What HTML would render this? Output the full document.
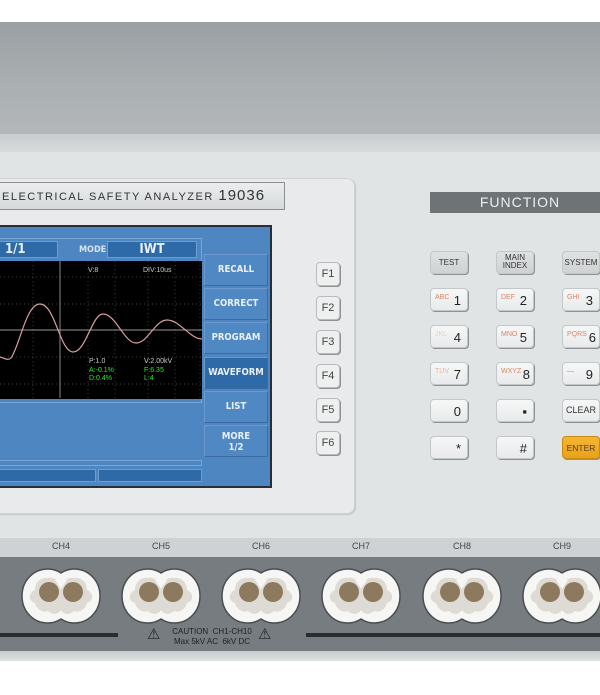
<!DOCTYPE html>
<html><head><meta charset="utf-8"><style>
*{margin:0;padding:0;box-sizing:border-box}
body{width:600px;height:695px;overflow:hidden;background:#fff;position:relative;font-family:"Liberation Sans",sans-serif}
.abs{position:absolute}
.key{position:absolute;width:38px;height:23px;border-radius:4px;background:linear-gradient(#f6f7f7,#e9eaeb);border:1px solid #c4c7c9;box-shadow:1px 1px 0 #8e9295;font-size:11px;color:#333}
.key .s{position:absolute;left:4px;top:5px;font-size:7px;color:#d9866a}
.key .n{position:absolute;right:6px;top:4px;font-size:13px;color:#222}
.key .c{position:absolute;left:0;right:0;text-align:center;top:6px;font-size:8px;color:#333}
.fb{position:absolute;left:316px;width:24px;height:24px;border-radius:4px;background:#eef0f0;border:1px solid #b9bcbe;box-shadow:1px 1px 0 #8e9295;font-size:11px;color:#444;text-align:center;line-height:22px}
.sb{position:absolute;left:204px;width:64px;height:32px;background:#5088c3;border:1px solid #6a9ad0;border-right-color:#3a6aa0;border-bottom-color:#3a6aa0;color:#e8f0fa;font-family:"DejaVu Sans Condensed","Liberation Sans",sans-serif;font-size:9.5px;font-weight:bold;text-align:center;line-height:30px}
.sock{position:absolute;top:568px;width:80px;height:56px}
.ch{position:absolute;top:541px;font-size:9px;color:#444;width:40px;text-align:center}
</style></head><body>
<div class="abs" style="left:0;top:22px;width:600px;height:112px;background:linear-gradient(#9a9fa3,#a9aeb1 50%,#b3b7ba)"></div>
<div class="abs" style="left:0;top:134px;width:600px;height:18px;background:linear-gradient(#c9ccce,#d8dbdc)"></div>
<div class="abs" style="left:0;top:152px;width:600px;height:388px;background:#e1e4e5"></div>
<div class="abs" style="left:-10px;top:178px;width:365px;height:336px;border-radius:8px;background:#e9eaeb;border:1px solid #cfd2d3;box-shadow:1px 1px 1px #c3c6c8"></div>
<div class="abs" style="left:0;top:182px;width:285px;height:28px;background:linear-gradient(#eceeee,#d6d9da);border:1px solid #8c8f90;border-left:none;font-size:11px;letter-spacing:1.5px;color:#333;line-height:26px;padding-left:2px">ELECTRICAL SAFETY ANALYZER <span style="font-size:15px;letter-spacing:1px">19036</span></div>
<div class="abs" style="left:0;top:225px;width:272px;height:263px;background:#4d86c1;border:2px solid #2a2f35;border-left:none"></div>
<div class="abs" style="left:0;top:238px;width:202px;height:165px;border:1px solid #7aa6d6;border-left:none"></div>
<div class="abs" style="left:0;top:241px;width:58px;height:17px;background:#2f6aa8;border:1px solid #6f9dd0;border-left:none;color:#e8f0fa;font-family:'DejaVu Sans Condensed',sans-serif;font-weight:bold;font-size:13px;line-height:15px;padding-left:5px">1/1</div>
<div class="abs" style="left:79px;top:245px;color:#d8e4f2;font-family:'DejaVu Sans Condensed',sans-serif;font-weight:bold;font-size:9px">MODE</div>
<div class="abs" style="left:107px;top:241px;width:90px;height:17px;background:#2f6aa8;border:1px solid #6f9dd0;color:#e8f0fa;font-family:'DejaVu Sans Condensed',sans-serif;font-weight:bold;font-size:13px;line-height:15px;text-align:center">IWT</div>
<svg class="abs" style="left:0;top:261px" width="202" height="138" viewBox="0 261 202 138">
<rect x="0" y="261" width="202" height="138" fill="#000"/>
<g stroke="#555" stroke-width="0.7" stroke-dasharray="1,3">
<line x1="33" y1="261" x2="33" y2="399"/><line x1="115" y1="261" x2="115" y2="399"/><line x1="148" y1="261" x2="148" y2="399"/><line x1="88" y1="261" x2="88" y2="399"/><line x1="175" y1="261" x2="175" y2="399"/><line x1="200" y1="261" x2="200" y2="399"/>
<line x1="0" y1="277" x2="202" y2="277"/><line x1="0" y1="304" x2="202" y2="304"/><line x1="0" y1="357" x2="202" y2="357"/><line x1="0" y1="384" x2="202" y2="384"/>
</g>
<line x1="60" y1="261" x2="60" y2="398" stroke="#888" stroke-width="1"/>
<line x1="0" y1="330" x2="202" y2="330" stroke="#999" stroke-width="1"/>
<path d="M0 357 C4 358,8 361,11 358 C20 345,26 304,40 304 C55 304,60 352,73 352 C86 352,92 314,103 314 C116 314,124 343,136 343 C148 343,155 320,167 320 C180 320,190 339,202 339" fill="none" stroke="#d9a0a0" stroke-width="1.2"/>
<text x="88" y="272" fill="#ccc" font-size="7">V:8</text>
<text x="143" y="272" fill="#ccc" font-size="7">DIV:10us</text>
<text x="89" y="363" fill="#ccc" font-size="7">P:1.0</text>
<text x="144" y="363" fill="#ccc" font-size="7">V:2.00kV</text>
<text x="89" y="372" fill="#2e2" font-size="7">A:-0.1%</text>
<text x="144" y="372" fill="#2e2" font-size="7">F:6.35</text>
<text x="89" y="380" fill="#2e2" font-size="7">D:0.4%</text>
<text x="144" y="380" fill="#2e2" font-size="7">L:4</text>
</svg>
<div class="abs" style="left:0;top:460px;width:202px;height:6px;border:1px solid #7aa6d6;border-left:none"></div>
<div class="abs" style="left:0;top:469px;width:96px;height:13px;background:#2f6aa8;border:1px solid #6f9dd0;border-left:none"></div>
<div class="abs" style="left:98px;top:469px;width:104px;height:13px;background:#2f6aa8;border:1px solid #6f9dd0"></div>
<div class="sb" style="top:254px">RECALL</div>
<div class="sb" style="top:288px">CORRECT</div>
<div class="sb" style="top:322px">PROGRAM</div>
<div class="sb" style="top:357px;background:#2f6aa8">WAVEFORM</div>
<div class="sb" style="top:391px">LIST</div>
<div class="sb" style="top:425px;line-height:11px;padding-top:5px">MORE<br>1/2</div>
<div class="fb" style="top:262px">F1</div><div class="fb" style="top:296px">F2</div><div class="fb" style="top:330px">F3</div><div class="fb" style="top:364px">F4</div><div class="fb" style="top:398px">F5</div><div class="fb" style="top:431px">F6</div>
<div class="abs" style="left:430px;top:192px;width:170px;height:21px;background:#6e7376;color:#eef0f0;font-size:14px;letter-spacing:1px;text-align:center;line-height:21px;padding-left:10px">FUNCTION</div>
<div class="key" style="left:430px;top:251px;background:linear-gradient(#dfe1e2,#cfd2d3)"><span class="c">TEST</span></div>
<div class="key" style="left:496px;top:251px;background:linear-gradient(#dfe1e2,#cfd2d3)"><span class="c" style="top:2px;line-height:8px">MAIN<br>INDEX</span></div>
<div class="key" style="left:562px;top:251px;background:linear-gradient(#dfe1e2,#cfd2d3)"><span class="c">SYSTEM</span></div>
<div class="key" style="left:430px;top:288px"><span class="s">ABC</span><span class="n">1</span></div>
<div class="key" style="left:496px;top:288px"><span class="s">DEF</span><span class="n">2</span></div>
<div class="key" style="left:562px;top:288px"><span class="s">GHI</span><span class="n">3</span></div>
<div class="key" style="left:430px;top:325px"><span class="s" style="color:#e8d0c0">JKL</span><span class="n">4</span></div>
<div class="key" style="left:496px;top:325px"><span class="s">MNO</span><span class="n">5</span></div>
<div class="key" style="left:562px;top:325px"><span class="s">PQRS</span><span class="n" style="right:3px">6</span></div>
<div class="key" style="left:430px;top:362px"><span class="s" style="color:#e6b89a">TUV</span><span class="n">7</span></div>
<div class="key" style="left:496px;top:362px"><span class="s">WXYZ</span><span class="n" style="right:3px">8</span></div>
<div class="key" style="left:562px;top:362px"><span class="s">—</span><span class="n">9</span></div>
<div class="key" style="left:430px;top:399px"><span class="n">0</span></div>
<div class="key" style="left:496px;top:399px"><span class="n">▪</span></div>
<div class="key" style="left:562px;top:399px"><span class="c" style="font-size:9px;top:5px">CLEAR</span></div>
<div class="key" style="left:430px;top:436px"><span class="n">*</span></div>
<div class="key" style="left:496px;top:436px"><span class="n">#</span></div>
<div class="key" style="left:562px;top:436px;background:linear-gradient(#f4b634,#e9a21a);border-color:#c98a10"><span class="c" style="font-size:8.5px;top:6px;color:#5a3a10">ENTER</span></div>
<div class="abs" style="left:0;top:538px;width:600px;height:20px;background:#cfd2d4"></div>
<div class="abs" style="left:0;top:557px;width:600px;height:94px;background:#777c80"></div>
<div class="abs" style="left:0;top:651px;width:600px;height:10px;background:linear-gradient(#c8cbcd,#dfe1e2)"></div>
<div class="ch" style="left:41px">CH4</div><div class="ch" style="left:141px">CH5</div><div class="ch" style="left:241px">CH6</div><div class="ch" style="left:341px">CH7</div><div class="ch" style="left:442px">CH8</div><div class="ch" style="left:542px">CH9</div>
<svg width="0" height="0" style="position:absolute"><defs>
<g id="so"><path d="M27 1 C33 1,37 3,40 5 C43 3,47 1,53 1 C68 1,79 13,79 28 C79 43,68 55,53 55 C47 55,43 53,40 51 C37 53,33 55,27 55 C12 55,1 43,1 28 C1 13,12 1,27 1Z" fill="#f6f6f4" stroke="#4a4d50" stroke-width="1.5"/>
<path d="M14 22 C14 14,20 9,27 10 C32 9,37 12,40 17 C43 12,48 9,53 10 C60 9,66 14,66 22 C73 25,73 33,66 35 C64 42,58 45,53 43 C49 47,43 47,40 42 C37 47,31 47,27 43 C22 45,16 42,14 35 C7 33,7 25,14 22Z" fill="#dedbd4"/>
<circle cx="28" cy="24" r="10" fill="#8d7a5e"/><circle cx="52" cy="24" r="10" fill="#8d7a5e"/>
<path d="M34 12 L40 21 L46 12Z" fill="#f6f6f4"/>
</g></defs></svg>
<svg class="sock" style="left:21px" viewBox="0 0 80 56"><use href="#so"/></svg>
<svg class="sock" style="left:121px" viewBox="0 0 80 56"><use href="#so"/></svg>
<svg class="sock" style="left:221px" viewBox="0 0 80 56"><use href="#so"/></svg>
<svg class="sock" style="left:321px" viewBox="0 0 80 56"><use href="#so"/></svg>
<svg class="sock" style="left:422px" viewBox="0 0 80 56"><use href="#so"/></svg>
<svg class="sock" style="left:522px" viewBox="0 0 80 56"><use href="#so"/></svg>
<div class="abs" style="left:0;top:633px;width:118px;height:4px;background:#2a2c2e"></div>
<div class="abs" style="left:306px;top:633px;width:294px;height:4px;background:#2a2c2e"></div>
<div class="abs" style="left:147px;top:625px;font-size:15px;color:#222">⚠</div>
<div class="abs" style="left:258px;top:625px;font-size:15px;color:#222">⚠</div>
<div class="abs" style="left:166px;top:627px;width:92px;font-size:8px;line-height:10px;color:#1e2022;text-align:center">CAUTION &nbsp;CH1-CH10<br>Max 5kV AC &nbsp;6kV DC</div>
</body></html>
